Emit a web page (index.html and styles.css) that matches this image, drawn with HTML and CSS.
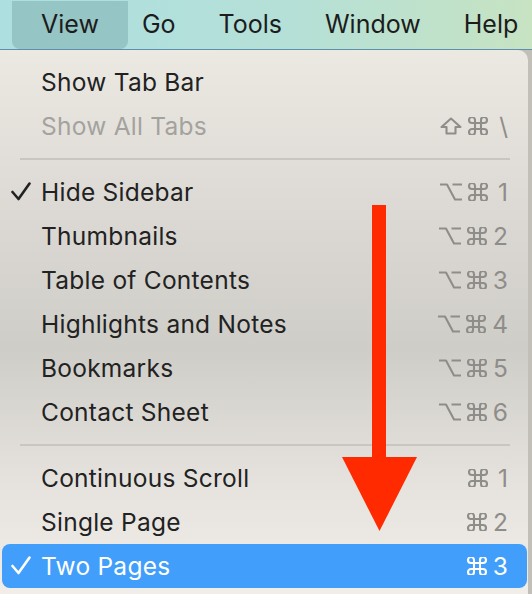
FILE: index.html
```html
<!DOCTYPE html>
<html lang="en">
<head>
    <meta charset="UTF-8">
    <title>View menu</title>
    <link rel="stylesheet" href="styles.css">
</head>
<body>
    <div class="screen">
        <div class="menubar">
            <div class="menubar-item active">View</div>
            <div class="menubar-item">Go</div>
            <div class="menubar-item">Tools</div>
            <div class="menubar-item">Window</div>
            <div class="menubar-item">Help</div>
        </div>

        <div class="desk">
            <div class="menu">
                <div class="menu-row"><span class="check"></span><span class="label">Show Tab Bar</span><span class="keys"></span></div>
                <div class="menu-row disabled"><span class="check"></span><span class="label">Show All Tabs</span>
                    <span class="keys">
                        <svg class="key-shift" viewBox="0 0 22 18"><path d="M11 1.5 L1.5 10 H6.5 V16.5 H15.5 V10 H20.5 Z"/></svg>
                        <svg class="key-cmd" viewBox="3 3 18 18"><path d="M15 6v12a3 3 0 1 0 3-3H6a3 3 0 1 0 3 3V6a3 3 0 1 0-3 3h12a3 3 0 1 0-3-3"/></svg>
                        <span class="key-char">\</span>
                    </span>
                </div>

                <div class="separator"></div>

                <div class="menu-row"><span class="check"><svg viewBox="0 0 20 19"><path d="M1.5 10 L7.5 17 L18.5 1.5"/></svg></span><span class="label">Hide Sidebar</span>
                    <span class="keys"><svg class="key-opt" viewBox="0 0 22 18"><path d="M0 1.5 H7 L15 16.5 H22 M12.5 1.5 H22"/></svg><svg class="key-cmd" viewBox="3 3 18 18"><path d="M15 6v12a3 3 0 1 0 3-3H6a3 3 0 1 0 3 3V6a3 3 0 1 0-3 3h12a3 3 0 1 0-3-3"/></svg><span class="key-char">1</span></span>
                </div>
                <div class="menu-row"><span class="check"></span><span class="label">Thumbnails</span>
                    <span class="keys"><svg class="key-opt" viewBox="0 0 22 18"><path d="M0 1.5 H7 L15 16.5 H22 M12.5 1.5 H22"/></svg><svg class="key-cmd" viewBox="3 3 18 18"><path d="M15 6v12a3 3 0 1 0 3-3H6a3 3 0 1 0 3 3V6a3 3 0 1 0-3 3h12a3 3 0 1 0-3-3"/></svg><span class="key-char">2</span></span>
                </div>
                <div class="menu-row"><span class="check"></span><span class="label">Table of Contents</span>
                    <span class="keys"><svg class="key-opt" viewBox="0 0 22 18"><path d="M0 1.5 H7 L15 16.5 H22 M12.5 1.5 H22"/></svg><svg class="key-cmd" viewBox="3 3 18 18"><path d="M15 6v12a3 3 0 1 0 3-3H6a3 3 0 1 0 3 3V6a3 3 0 1 0-3 3h12a3 3 0 1 0-3-3"/></svg><span class="key-char">3</span></span>
                </div>
                <div class="menu-row"><span class="check"></span><span class="label">Highlights and Notes</span>
                    <span class="keys"><svg class="key-opt" viewBox="0 0 22 18"><path d="M0 1.5 H7 L15 16.5 H22 M12.5 1.5 H22"/></svg><svg class="key-cmd" viewBox="3 3 18 18"><path d="M15 6v12a3 3 0 1 0 3-3H6a3 3 0 1 0 3 3V6a3 3 0 1 0-3 3h12a3 3 0 1 0-3-3"/></svg><span class="key-char">4</span></span>
                </div>
                <div class="menu-row"><span class="check"></span><span class="label">Bookmarks</span>
                    <span class="keys"><svg class="key-opt" viewBox="0 0 22 18"><path d="M0 1.5 H7 L15 16.5 H22 M12.5 1.5 H22"/></svg><svg class="key-cmd" viewBox="3 3 18 18"><path d="M15 6v12a3 3 0 1 0 3-3H6a3 3 0 1 0 3 3V6a3 3 0 1 0-3 3h12a3 3 0 1 0-3-3"/></svg><span class="key-char">5</span></span>
                </div>
                <div class="menu-row"><span class="check"></span><span class="label">Contact Sheet</span>
                    <span class="keys"><svg class="key-opt" viewBox="0 0 22 18"><path d="M0 1.5 H7 L15 16.5 H22 M12.5 1.5 H22"/></svg><svg class="key-cmd" viewBox="3 3 18 18"><path d="M15 6v12a3 3 0 1 0 3-3H6a3 3 0 1 0 3 3V6a3 3 0 1 0-3 3h12a3 3 0 1 0-3-3"/></svg><span class="key-char">6</span></span>
                </div>

                <div class="separator"></div>

                <div class="menu-row"><span class="check"></span><span class="label">Continuous Scroll</span>
                    <span class="keys"><svg class="key-cmd" viewBox="3 3 18 18"><path d="M15 6v12a3 3 0 1 0 3-3H6a3 3 0 1 0 3 3V6a3 3 0 1 0-3 3h12a3 3 0 1 0-3-3"/></svg><span class="key-char">1</span></span>
                </div>
                <div class="menu-row"><span class="check"></span><span class="label">Single Page</span>
                    <span class="keys"><svg class="key-cmd" viewBox="3 3 18 18"><path d="M15 6v12a3 3 0 1 0 3-3H6a3 3 0 1 0 3 3V6a3 3 0 1 0-3 3h12a3 3 0 1 0-3-3"/></svg><span class="key-char">2</span></span>
                </div>
                <div class="menu-row selected"><span class="check"><svg viewBox="0 0 20 19"><path d="M1.5 10 L7.5 17 L18.5 1.5"/></svg></span><span class="label">Two Pages</span>
                    <span class="keys"><svg class="key-cmd" viewBox="3 3 18 18"><path d="M15 6v12a3 3 0 1 0 3-3H6a3 3 0 1 0 3 3V6a3 3 0 1 0-3 3h12a3 3 0 1 0-3-3"/></svg><span class="key-char">3</span></span>
                </div>
            </div>
        </div>

        <!-- annotation arrow -->
        <svg class="arrow" viewBox="0 0 75 326">
            <rect x="30" y="0" width="14" height="253"/>
            <polygon points="0,252 75,252 37.5,326"/>
        </svg>
    </div>
</body>
</html>
```

FILE: styles.css
```css
body {
    margin: 0;
    background: #c2beb8;
    font-family: 'Inter', 'Liberation Sans', sans-serif;
    color: #222222;
}
.screen {
    position: relative;
    width: 532px;
    height: 594px;
    overflow: hidden;
}
.menubar {
    display: flex;
    align-items: center;
    height: 49px;
    padding-left: 12px;
    background: linear-gradient(90deg, #addfe1, #b5e0d7 55%, #c7e3c2);
    border-bottom: 1px solid #5b90ae;
    font-size: 25px;
    color: #1c1c1c;
}
.menubar-item {
    height: 48px;
    line-height: 46px;
    padding: 0 21.5px;
}
.menubar-item.active {
    padding: 0 29px;
    margin-right: -7.5px;
    background: #95c5c4;
    border-radius: 0 0 8px 8px;
}
.desk {
    display: flex;
}
.menu {
    width: 528px;
    height: 544px;
    box-sizing: border-box;
    padding: 10px 0 6px;
    background: linear-gradient(180deg, #ece9e3 0%, #dcd9d4 30%, #cfcdc8 55%, #e6e3de 80%, #f1eeea 100%);
    border-top-right-radius: 10px;
    font-size: 24.5px;
}
.menu-row {
    display: grid;
    grid-template-columns: 39px 1fr auto;
    align-items: baseline;
    height: 44px;
    line-height: 45px;
    margin: 0 1px 0 2px;
    padding-right: 19px;
    border-radius: 8px;
}
.label {
    letter-spacing: 0.25px;
}
.check svg {
    width: 20px;
    height: 19px;
    margin-left: 9px;
    fill: none;
    stroke: #222222;
    stroke-width: 2.6;
    stroke-linecap: round;
    stroke-linejoin: round;
}
.keys {
    display: flex;
    align-items: baseline;
    gap: 6px;
    color: #8f8d89;
}
.keys svg {
    fill: none;
    stroke: #8f8d89;
    stroke-width: 2.1;
    stroke-linejoin: round;
}
.key-opt {
    width: 22px;
    height: 18px;
}
.key-cmd {
    width: 20px;
    height: 18px;
}
.key-shift {
    width: 22px;
    height: 18px;
}
.key-char {
    min-width: 14px;
    text-align: right;
}
.disabled .label {
    color: #a4a29e;
}
.selected {
    background: #419efa;
    color: #ffffff;
}
.selected .check svg {
    stroke: #ffffff;
}
.selected .keys {
    color: #ffffff;
}
.selected .keys svg {
    stroke: #ffffff;
}
.separator {
    height: 2px;
    margin: 10px 18px 10px 20px;
    background: #c9c6c1;
}
.arrow {
    position: absolute;
    left: 342px;
    top: 205px;
    width: 75px;
    height: 326px;
    fill: #ff2a00;
}
```
